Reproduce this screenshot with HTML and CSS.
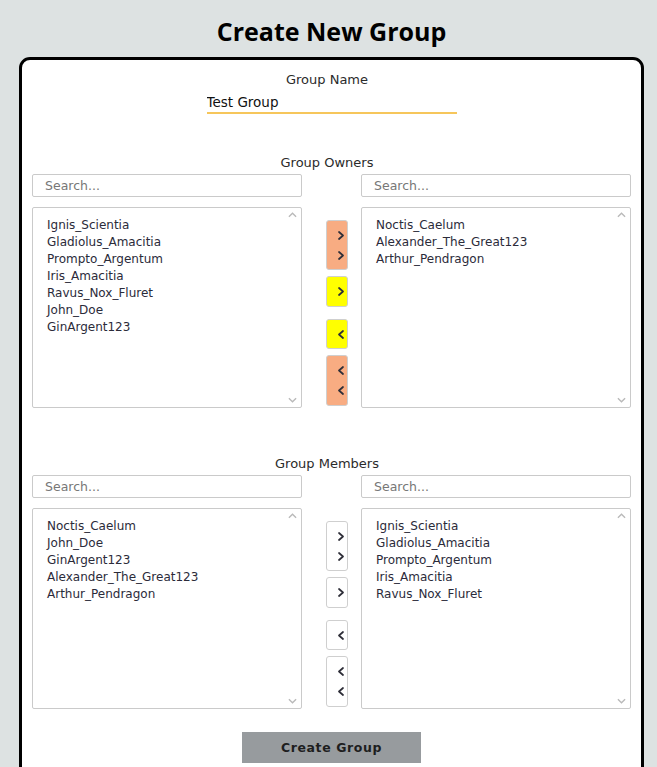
FILE: index.html
```html
<!DOCTYPE html>
<html lang="en">
<head>
<meta charset="utf-8">
<title>Create New Group</title>
<link rel="stylesheet" href="styles.css">
</head>
<body>
<h1 class="title">Create New Group</h1>
<div class="card">
  <div class="name-block">
    <div class="label">Group Name</div>
    <input class="name-input" type="text" value="Test Group">
  </div>

  <div class="section">
    <div class="label">Group Owners</div>
    <div class="transfer">
      <input class="search" type="text" placeholder="Search...">
      <div class="spacer"></div>
      <input class="search" type="text" placeholder="Search...">
      <div class="list">
        <div>Ignis_Scientia</div>
        <div>Gladiolus_Amacitia</div>
        <div>Prompto_Argentum</div>
        <div>Iris_Amacitia</div>
        <div>Ravus_Nox_Fluret</div>
        <div>John_Doe</div>
        <div>GinArgent123</div>
        <svg class="arrow up" viewBox="0 0 10 6"><path d="M1 5 L5 1 L9 5"/></svg>
        <svg class="arrow down" viewBox="0 0 10 6"><path d="M1 1 L5 5 L9 1"/></svg>
      </div>
      <div class="buttons">
        <button class="btn dbl salmon" aria-label="Move all right"><svg class="chev" viewBox="0 0 6 9"><path d="M1 1 L5 4.5 L1 8"/></svg><svg class="chev" viewBox="0 0 6 9"><path d="M1 1 L5 4.5 L1 8"/></svg></button>
        <button class="btn one yellow" aria-label="Move right"><svg class="chev" viewBox="0 0 6 9"><path d="M1 1 L5 4.5 L1 8"/></svg></button>
        <button class="btn two yellow" aria-label="Move left"><svg class="chev" viewBox="0 0 6 9"><path d="M5 1 L1 4.5 L5 8"/></svg></button>
        <button class="btn dbl last salmon" aria-label="Move all left"><svg class="chev" viewBox="0 0 6 9"><path d="M5 1 L1 4.5 L5 8"/></svg><svg class="chev" viewBox="0 0 6 9"><path d="M5 1 L1 4.5 L5 8"/></svg></button>
      </div>
      <div class="list">
        <div>Noctis_Caelum</div>
        <div>Alexander_The_Great123</div>
        <div>Arthur_Pendragon</div>
        <svg class="arrow up" viewBox="0 0 10 6"><path d="M1 5 L5 1 L9 5"/></svg>
        <svg class="arrow down" viewBox="0 0 10 6"><path d="M1 1 L5 5 L9 1"/></svg>
      </div>
    </div>
  </div>

  <div class="section members">
    <div class="label">Group Members</div>
    <div class="transfer">
      <input class="search" type="text" placeholder="Search...">
      <div class="spacer"></div>
      <input class="search" type="text" placeholder="Search...">
      <div class="list">
        <div>Noctis_Caelum</div>
        <div>John_Doe</div>
        <div>GinArgent123</div>
        <div>Alexander_The_Great123</div>
        <div>Arthur_Pendragon</div>
        <svg class="arrow up" viewBox="0 0 10 6"><path d="M1 5 L5 1 L9 5"/></svg>
        <svg class="arrow down" viewBox="0 0 10 6"><path d="M1 1 L5 5 L9 1"/></svg>
      </div>
      <div class="buttons">
        <button class="btn dbl" aria-label="Move all right"><svg class="chev" viewBox="0 0 6 9"><path d="M1 1 L5 4.5 L1 8"/></svg><svg class="chev" viewBox="0 0 6 9"><path d="M1 1 L5 4.5 L1 8"/></svg></button>
        <button class="btn one" aria-label="Move right"><svg class="chev" viewBox="0 0 6 9"><path d="M1 1 L5 4.5 L1 8"/></svg></button>
        <button class="btn two" aria-label="Move left"><svg class="chev" viewBox="0 0 6 9"><path d="M5 1 L1 4.5 L5 8"/></svg></button>
        <button class="btn dbl last" aria-label="Move all left"><svg class="chev" viewBox="0 0 6 9"><path d="M5 1 L1 4.5 L5 8"/></svg><svg class="chev" viewBox="0 0 6 9"><path d="M5 1 L1 4.5 L5 8"/></svg></button>
      </div>
      <div class="list">
        <div>Ignis_Scientia</div>
        <div>Gladiolus_Amacitia</div>
        <div>Prompto_Argentum</div>
        <div>Iris_Amacitia</div>
        <div>Ravus_Nox_Fluret</div>
        <svg class="arrow up" viewBox="0 0 10 6"><path d="M1 5 L5 1 L9 5"/></svg>
        <svg class="arrow down" viewBox="0 0 10 6"><path d="M1 1 L5 5 L9 1"/></svg>
      </div>
    </div>
  </div>

  <div class="actions">
    <button class="create">Create Group</button>
  </div>
</div>
</body>
</html>
```
FILE: styles.css
```css
html, body {
  margin: 0;
  padding: 0;
}
body {
  background: #dde2e2;
  font-family: "DejaVu Sans", Verdana, sans-serif;
  color: #2b2b3a;
}
.title {
  margin: 0 0 10px 19px;
  width: 625px;
  padding-top: 15px;
  text-align: center;
  font-family: "Open Sans", "Liberation Sans", sans-serif;
  font-weight: 700;
  font-size: 25px;
  line-height: 32px;
  color: #000;
}
.card {
  margin-left: 19px;
  width: 625px;
  box-sizing: border-box;
  background: #fff;
  border: 3px solid #000;
  border-radius: 11px;
  padding: 11px 10px 40px;
}
.label {
  text-align: center;
  padding-right: 9px;
  font-size: 13px;
  line-height: 17px;
  color: #2b2b2b;
}
.name-block {
  display: flex;
  flex-direction: column;
  align-items: center;
}
.name-block .label {
  align-self: stretch;
}
.name-input {
  margin-top: 4px;
  width: 250px;
  height: 22px;
  box-sizing: border-box;
  border: none;
  border-bottom: 2px solid #f6c65b;
  padding: 0;
  font-family: "DejaVu Sans", sans-serif;
  font-size: 13.5px;
  color: #111;
  outline: none;
  background: transparent;
}
.section {
  margin-top: 40px;
}
.section.members {
  margin-top: 47px;
}
.transfer {
  margin-top: 3px;
  display: grid;
  grid-template-columns: 270px 59px 270px;
  grid-template-rows: 23px 201px;
  row-gap: 10px;
}
.search {
  box-sizing: border-box;
  width: 270px;
  height: 23px;
  border: 1px solid #cacaca;
  border-radius: 2px;
  padding: 0 0 0 12px;
  font-family: "DejaVu Sans", sans-serif;
  font-size: 12.5px;
  color: #333;
  outline: none;
}
.search::placeholder {
  color: #777;
}
.list {
  position: relative;
  box-sizing: border-box;
  border: 1px solid #cacaca;
  border-radius: 2px;
  padding: 9px 14px;
  font-size: 12px;
  line-height: 17px;
  color: #2b2b3a;
}
.arrow {
  position: absolute;
  right: 4px;
  width: 9px;
  height: 6px;
  fill: none;
  stroke: #b9b9b9;
  stroke-width: 1.5;
}
.arrow.up { top: 4px; }
.arrow.down { bottom: 4px; }
.buttons {
  display: flex;
  flex-direction: column;
  align-items: flex-start;
  padding-left: 24px;
  padding-top: 13px;
}
.btn {
  width: 22px;
  box-sizing: border-box;
  border: 1px solid #cfcfcf;
  border-radius: 3px;
  background: #fff;
  padding: 0 0 0 11px;
  display: flex;
  flex-direction: column;
  justify-content: center;
  align-items: flex-start;
  gap: 11px;
}
.chev {
  width: 6px;
  height: 9px;
  fill: none;
  stroke: #2e2e38;
  stroke-width: 1.7;
  stroke-linecap: round;
  stroke-linejoin: round;
}
.btn.dbl { height: 50px; }
.btn.one { height: 31px; margin-top: 6px; }
.btn.two { height: 30px; margin-top: 12px; }
.btn.last { height: 51px; margin-top: 6px; }
.btn.salmon { background: #f8ac82; }
.btn.yellow { background: #ffff00; }
.actions {
  margin-top: 23px;
  display: flex;
  justify-content: center;
}
.create {
  width: 179px;
  height: 31px;
  border: none;
  background: #979b9e;
  font-family: "DejaVu Sans", sans-serif;
  font-size: 12.5px;
  font-weight: 700;
  letter-spacing: 0.6px;
  color: #1e1e1e;
}
```
